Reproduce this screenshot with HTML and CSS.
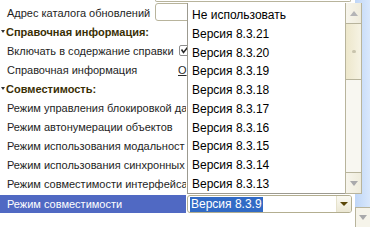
FILE: index.html
```html
<!DOCTYPE html>
<html>
<head>
<meta charset="utf-8">
<link rel="stylesheet" href="styles.css">
</head>
<body>
<div class="screen">
  <div class="form">
    <div class="edge"><div class="edge-line"></div></div>
    <div class="row">
      <div class="label w155">Адрес каталога обновлений</div>
      <div class="input"></div>
    </div>
    <div class="row section"><span class="tri"></span><span>Справочная информация:</span></div>
    <div class="row">
      <div class="label w179">Включать в содержание справки</div>
      <div class="check"><svg width="9" height="9" viewBox="0 0 9 9"><polyline points="1.5,3.5 3.5,6.5 7.5,1.5" fill="none" stroke="#2a2a2a" stroke-width="1.6"/></svg></div>
    </div>
    <div class="row">
      <div class="label w178">Справочная информация</div>
      <div class="link">О</div>
    </div>
    <div class="row section"><span class="tri"></span><span>Совместимость:</span></div>
    <div class="row"><div class="label w186">Режим управления блокировкой да</div></div>
    <div class="row"><div class="label w186">Режим автонумерации объектов</div></div>
    <div class="row"><div class="label w186">Режим использования модальност</div></div>
    <div class="row"><div class="label w186">Режим использования синхронных</div></div>
    <div class="row"><div class="label w186">Режим совместимости интерфейса</div></div>
    <div class="row last">
      <div class="label sel">Режим совместимости</div>
      <div class="combo">
        <div class="combo-text"><span class="combo-sel">Версия 8.3.9</span></div>
        <div class="combo-btn"><span class="dtri"></span></div>
      </div>
    </div>
  </div>
  <div class="vscroll">
    <div class="vtrack"></div>
    <div class="vbtn"><span class="gtri down"></span></div>
  </div>

  <div class="popup">
    <div class="list">
      <div class="item">Не использовать</div>
      <div class="item">Версия 8.3.21</div>
      <div class="item">Версия 8.3.20</div>
      <div class="item">Версия 8.3.19</div>
      <div class="item">Версия 8.3.18</div>
      <div class="item">Версия 8.3.17</div>
      <div class="item">Версия 8.3.16</div>
      <div class="item">Версия 8.3.15</div>
      <div class="item">Версия 8.3.14</div>
      <div class="item">Версия 8.3.13</div>
    </div>
    <div class="sbar">
      <div class="sbtn up"><span class="gtri upt"></span></div>
      <div class="thumb"><span class="grip"></span></div>
      <div class="strack"></div>
      <div class="sbtn dn"><span class="gtri down"></span></div>
    </div>
  </div>
</div>
</body>
</html>
```
FILE: styles.css
```css
* { box-sizing: border-box; }
body {
  margin: 0;
  width: 370px;
  height: 227px;
  overflow: hidden;
  background: #fff;
  font-family: "Liberation Sans", Arial, sans-serif;
  font-size: 11px;
  color: #1e1e1e;
}
.screen {
  position: relative;
  display: flex;
  width: 370px;
  height: 227px;
}
.form {
  width: 355px;
  display: flex;
  flex-direction: column;
}
.edge { height: 3px; }
.edge-line {
  margin-left: 155px;
  width: 196px;
  height: 2px;
  border-right: 1px solid #b8b49c;
  border-bottom: 1px solid #b8b49c;
  border-left: 1px solid #b8b49c;
  border-radius: 0 0 3px 3px;
}
.row {
  display: flex;
  align-items: center;
  height: 19px;
}
.label {
  padding-left: 7px;
  white-space: nowrap;
  overflow: hidden;
  flex: none;
}
.w155 { width: 155px; }
.w178 { width: 178px; }
.w179 { width: 179px; }
.w186 { width: 186px; }
.input {
  width: 196px;
  height: 18px;
  border: 1px solid #b8b49c;
  border-radius: 3px;
  background: #fff;
  align-self: flex-start;
}
.section {
  font-weight: bold;
  color: #3a2f05;
  padding-left: 1px;
  gap: 1px;
}
.tri {
  width: 0;
  height: 0;
  border-left: 2.5px solid transparent;
  border-right: 2.5px solid transparent;
  border-top: 3px solid #333;
}
.check {
  width: 11px;
  height: 11px;
  border: 1px solid #8c8c8c;
  border-radius: 2px;
  display: flex;
  align-items: center;
  justify-content: center;
  background: #fff;
}
.link {
  text-decoration: underline;
  color: #2a2a2a;
  white-space: nowrap;
}
.row.last {
  height: 18px;
  margin-top: 2px;
  align-items: stretch;
}
.sel {
  width: 186px;
  margin-right: 1px;
  background: #5069c3;
  color: #fff;
  display: flex;
  align-items: center;
}
.combo {
  width: 165px;
  height: 18px;
  border: 1px solid #b3ae90;
  border-radius: 3px;
  display: flex;
  align-items: center;
  padding-left: 2px;
}
.combo-text {
  flex: 1;
  display: flex;
  align-items: center;
}
.combo-sel {
  background: #316ac5;
  color: #fff;
  padding: 1px 1px;
  line-height: 13px;
  font-size: 12px;
}
.combo-btn {
  width: 15px;
  height: 16px;
  border-left: 1px solid #e6e2cc;
  border-radius: 0 2px 2px 0;
  background: linear-gradient(to bottom, #fbfaf3, #ebe7d3);
  display: flex;
  align-items: center;
  justify-content: center;
}
.dtri {
  width: 0;
  height: 0;
  border-left: 4px solid transparent;
  border-right: 4px solid transparent;
  border-top: 4px solid #5a4608;
}
.vscroll {
  width: 15px;
  display: flex;
  flex-direction: column;
}
.vtrack {
  flex: 1;
  background: linear-gradient(to right, #bfd6f7, #d9e8fc);
}
.vbtn {
  height: 20px;
  border-left: 1px solid #b8b49c;
  border-top: 1px solid #b8b49c;
  background: #f6f4ea;
  display: flex;
  align-items: center;
  justify-content: center;
}
.gtri {
  width: 0;
  height: 0;
  border-left: 4px solid transparent;
  border-right: 4px solid transparent;
}
.gtri.down { border-top: 5px solid #a9a9ab; }
.gtri.upt { border-bottom: 5px solid #b4b4b6; }

.popup {
  position: absolute;
  left: 187px;
  top: 3px;
  width: 175px;
  height: 191px;
  display: flex;
  background: #fff;
  border-left: 1px solid #9c9a90;
}
.list {
  flex: 1;
  padding-top: 3px;
  border-bottom: 1px solid #9c9a90;
  height: 191px;
}
.item {
  height: 18.75px;
  line-height: 18.75px;
  padding-left: 4px;
  font-size: 12px;
  color: #000;
  white-space: nowrap;
}
.sbar {
  width: 17px;
  height: 191px;
  border-left: 1px solid #b8b49c;
  border-right: 1px solid #b8b49c;
  border-bottom: 1px solid #b8b49c;
  display: flex;
  flex-direction: column;
  background: #f8f7f1;
}
.sbtn {
  height: 21px;
  display: flex;
  align-items: center;
  justify-content: center;
  background: linear-gradient(to right, #f7f5ec, #efecdc);
}
.sbtn.up { border-bottom: 1px solid #b8b49c; }
.sbtn.dn { border-top: 1px solid #b8b49c; }
.thumb {
  height: 56px;
  border-bottom: 1px solid #b8b49c;
  background: linear-gradient(to right, #ede7cb, #f6f3e4);
  display: flex;
  align-items: center;
  justify-content: center;
}
.grip {
  width: 4px;
  height: 3px;
  border-radius: 2px;
  background: #c9c4ad;
}
.strack { flex: 1; }
```
